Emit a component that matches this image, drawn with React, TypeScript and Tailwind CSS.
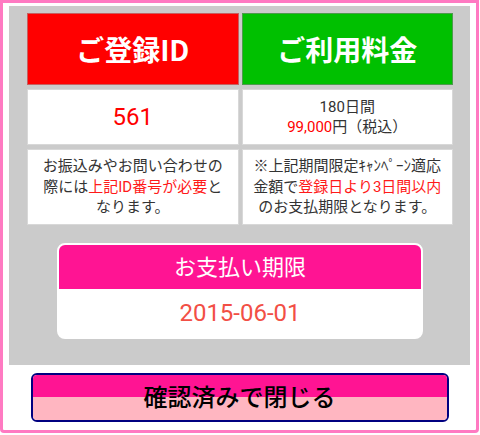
import React from "react";

const ff = { fontFamily: '"Roboto", "Noto Sans CJK JP", sans-serif' };
const jp = { fontFamily: '"Noto Sans CJK JP", sans-serif' };

export default function App() {
  return (
    <div className="w-[480px] h-[435px] bg-white" style={ff}>
      <div className="w-[479px] h-[433px] border-[3px] border-[#ff7ac2] rounded-b-[4px] bg-white px-[6px] pt-[3px] flex flex-col">
        <div className="bg-[#cbcbcb] h-[359px] pt-[7px] pl-[18px] pr-[17px]">
          <div className="grid grid-cols-2 gap-x-[3px] gap-y-[4px]">
            <div className="h-[72px] bg-[#ff0000] border border-[#a0a0a0]/60 flex items-center justify-center text-white text-[28px] font-bold" style={jp}>
              ご登録ID
            </div>
            <div className="h-[72px] bg-[#00c000] border border-[#808080]/60 flex items-center justify-center text-white text-[28px] font-bold" style={jp}>
              ご利用料金
            </div>
            <div className="h-[56px] bg-white border border-[#d8d8d8] flex items-center justify-center text-[#ff0000] text-[24px]">
              561
            </div>
            <div className="h-[56px] bg-white border border-[#d8d8d8] flex flex-col items-center justify-center text-[#333] text-[15px] leading-[20px]">
              <div>180日間</div>
              <div>
                <span className="text-[#ff0000]">99,000</span>円（税込）
              </div>
            </div>
            <div className="h-[76px] bg-white border border-[#d8d8d8] flex items-center justify-center text-center text-[#333] text-[15px] leading-[20.5px]">
              <div>
                お振込みやお問い合わせの
                <br />
                際には<span className="text-[#ff1a1a]">上記ID番号が必要</span>と
                <br />
                なります。
              </div>
            </div>
            <div className="h-[76px] bg-white border border-[#d8d8d8] flex items-center justify-center text-center text-[#333] text-[15px] leading-[20.5px]">
              <div>
                ※上記期間限定ｷｬﾝﾍﾟｰﾝ適応
                <br />
                金額で<span className="text-[#ff1a1a]">登録日より3日間以内</span>
                <br />
                のお支払期限となります。
              </div>
            </div>
          </div>
          <div className="mt-[18px] mx-auto w-[366px] h-[96px] border-2 border-white rounded-[8px] overflow-hidden bg-white flex flex-col">
            <div className="h-[44px] bg-[#ff1493] flex items-center justify-center text-white text-[22px]">
              お支払い期限
            </div>
            <div className="flex-1 flex items-center justify-center text-[#f24f45] text-[24px]">
              2015-06-01
            </div>
          </div>
        </div>
        <div className="mt-[8px] mx-auto w-[418px] h-[49px] border-2 border-[#000080] rounded-[6px] overflow-hidden relative">
          <div className="h-[22px] bg-[#ff1493]" />
          <div className="h-[23px] bg-[#ffb6c1]" />
          <div className="absolute inset-0 flex items-center justify-center text-black text-[24px] font-medium">
            確認済みで閉じる
          </div>
        </div>
      </div>
    </div>
  );
}
